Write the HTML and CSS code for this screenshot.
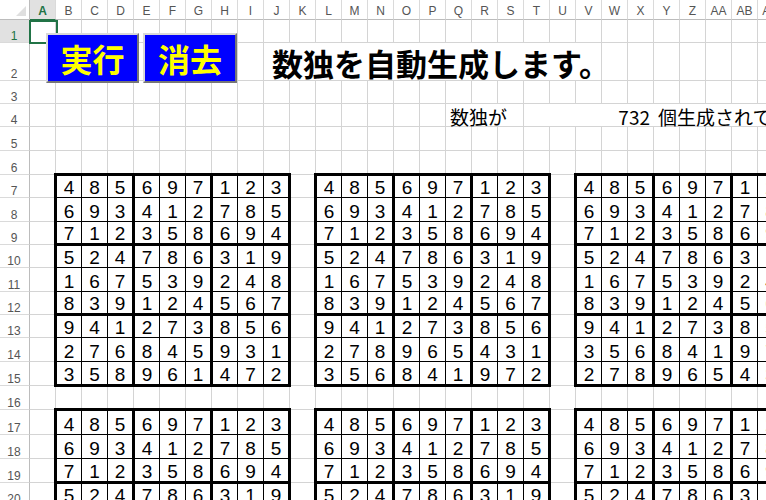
FILE: index.html
```html
<!DOCTYPE html>
<html lang="ja">
<head>
<meta charset="utf-8">
<title>数独自動生成</title>
<link rel="stylesheet" href="styles.css">
</head>
<body>
<div class="sheet">
  <div class="layer grid-bg">
    <div class="corner"><span class="select-all"></span></div>
    <div class="ch on">A</div><div class="ch">B</div><div class="ch">C</div><div class="ch">D</div><div class="ch">E</div><div class="ch">F</div><div class="ch">G</div><div class="ch">H</div><div class="ch">I</div><div class="ch">J</div><div class="ch">K</div><div class="ch">L</div><div class="ch">M</div><div class="ch">N</div><div class="ch">O</div><div class="ch">P</div><div class="ch">Q</div><div class="ch">R</div><div class="ch">S</div><div class="ch">T</div><div class="ch">U</div><div class="ch">V</div><div class="ch">W</div><div class="ch">X</div><div class="ch">Y</div><div class="ch">Z</div><div class="ch">AA</div><div class="ch">AB</div><div class="ch">AC</div><div class="ch">AD</div>
    <div class="rh on">1</div><div class="gl"></div>
    <div class="rh">2</div><div class="gl"></div>
    <div class="rh">3</div><div class="gl"></div>
    <div class="rh">4</div><div class="gl"></div>
    <div class="rh">5</div><div class="gl"></div>
    <div class="rh">6</div><div class="gl"></div>
    <div class="rh">7</div><div class="gl"></div>
    <div class="rh">8</div><div class="gl"></div>
    <div class="rh">9</div><div class="gl"></div>
    <div class="rh">10</div><div class="gl"></div>
    <div class="rh">11</div><div class="gl"></div>
    <div class="rh">12</div><div class="gl"></div>
    <div class="rh">13</div><div class="gl"></div>
    <div class="rh">14</div><div class="gl"></div>
    <div class="rh">15</div><div class="gl"></div>
    <div class="rh">16</div><div class="gl"></div>
    <div class="rh">17</div><div class="gl"></div>
    <div class="rh">18</div><div class="gl"></div>
    <div class="rh">19</div><div class="gl"></div>
    <div class="rh">20</div><div class="gl"></div>
    <div class="rh">21</div><div class="gl"></div>
    <div class="rh">22</div><div class="gl"></div>
    <div class="rh">23</div><div class="gl"></div>
    <div class="rh">24</div><div class="gl"></div>
    <div class="rh">25</div><div class="gl"></div>
  </div>

  <div class="layer grid-fg">
    <div class="active-cell"></div>
    <div class="buttons">
      <button class="btn btn-run">実行</button>
      <button class="btn btn-clear">消去</button>
    </div>
    <div class="title">数独を自動生成します。</div>
    <div class="count-label">数独が</div>
    <div class="count">732</div>
    <div class="count-tail">個生成されています。</div>

    <div class="sudoku upper c1">
      <span>4</span><span>8</span><span>5</span><span>6</span><span>9</span><span>7</span><span>1</span><span>2</span><span>3</span>
      <span>6</span><span>9</span><span>3</span><span>4</span><span>1</span><span>2</span><span>7</span><span>8</span><span>5</span>
      <span>7</span><span>1</span><span>2</span><span>3</span><span>5</span><span>8</span><span>6</span><span>9</span><span>4</span>
      <span>5</span><span>2</span><span>4</span><span>7</span><span>8</span><span>6</span><span>3</span><span>1</span><span>9</span>
      <span>1</span><span>6</span><span>7</span><span>5</span><span>3</span><span>9</span><span>2</span><span>4</span><span>8</span>
      <span>8</span><span>3</span><span>9</span><span>1</span><span>2</span><span>4</span><span>5</span><span>6</span><span>7</span>
      <span>9</span><span>4</span><span>1</span><span>2</span><span>7</span><span>3</span><span>8</span><span>5</span><span>6</span>
      <span>2</span><span>7</span><span>6</span><span>8</span><span>4</span><span>5</span><span>9</span><span>3</span><span>1</span>
      <span>3</span><span>5</span><span>8</span><span>9</span><span>6</span><span>1</span><span>4</span><span>7</span><span>2</span>
    </div>

    <div class="sudoku upper c2">
      <span>4</span><span>8</span><span>5</span><span>6</span><span>9</span><span>7</span><span>1</span><span>2</span><span>3</span>
      <span>6</span><span>9</span><span>3</span><span>4</span><span>1</span><span>2</span><span>7</span><span>8</span><span>5</span>
      <span>7</span><span>1</span><span>2</span><span>3</span><span>5</span><span>8</span><span>6</span><span>9</span><span>4</span>
      <span>5</span><span>2</span><span>4</span><span>7</span><span>8</span><span>6</span><span>3</span><span>1</span><span>9</span>
      <span>1</span><span>6</span><span>7</span><span>5</span><span>3</span><span>9</span><span>2</span><span>4</span><span>8</span>
      <span>8</span><span>3</span><span>9</span><span>1</span><span>2</span><span>4</span><span>5</span><span>6</span><span>7</span>
      <span>9</span><span>4</span><span>1</span><span>2</span><span>7</span><span>3</span><span>8</span><span>5</span><span>6</span>
      <span>2</span><span>7</span><span>8</span><span>9</span><span>6</span><span>5</span><span>4</span><span>3</span><span>1</span>
      <span>3</span><span>5</span><span>6</span><span>8</span><span>4</span><span>1</span><span>9</span><span>7</span><span>2</span>
    </div>

    <div class="sudoku upper c3">
      <span>4</span><span>8</span><span>5</span><span>6</span><span>9</span><span>7</span><span>1</span><span>2</span><span>3</span>
      <span>6</span><span>9</span><span>3</span><span>4</span><span>1</span><span>2</span><span>7</span><span>8</span><span>5</span>
      <span>7</span><span>1</span><span>2</span><span>3</span><span>5</span><span>8</span><span>6</span><span>9</span><span>4</span>
      <span>5</span><span>2</span><span>4</span><span>7</span><span>8</span><span>6</span><span>3</span><span>1</span><span>9</span>
      <span>1</span><span>6</span><span>7</span><span>5</span><span>3</span><span>9</span><span>2</span><span>4</span><span>8</span>
      <span>8</span><span>3</span><span>9</span><span>1</span><span>2</span><span>4</span><span>5</span><span>6</span><span>7</span>
      <span>9</span><span>4</span><span>1</span><span>2</span><span>7</span><span>3</span><span>8</span><span>5</span><span>6</span>
      <span>3</span><span>5</span><span>6</span><span>8</span><span>4</span><span>1</span><span>9</span><span>7</span><span>2</span>
      <span>2</span><span>7</span><span>8</span><span>9</span><span>6</span><span>5</span><span>4</span><span>3</span><span>1</span>
    </div>

    <div class="sudoku lower c1">
      <span>4</span><span>8</span><span>5</span><span>6</span><span>9</span><span>7</span><span>1</span><span>2</span><span>3</span>
      <span>6</span><span>9</span><span>3</span><span>4</span><span>1</span><span>2</span><span>7</span><span>8</span><span>5</span>
      <span>7</span><span>1</span><span>2</span><span>3</span><span>5</span><span>8</span><span>6</span><span>9</span><span>4</span>
      <span>5</span><span>2</span><span>4</span><span>7</span><span>8</span><span>6</span><span>3</span><span>1</span><span>9</span>
      <span>1</span><span>6</span><span>7</span><span>5</span><span>3</span><span>9</span><span>2</span><span>4</span><span>8</span>
      <span>8</span><span>3</span><span>9</span><span>1</span><span>2</span><span>4</span><span>5</span><span>6</span><span>7</span>
      <span>9</span><span>4</span><span>1</span><span>2</span><span>7</span><span>3</span><span>8</span><span>5</span><span>6</span>
      <span>3</span><span>5</span><span>8</span><span>9</span><span>6</span><span>1</span><span>4</span><span>7</span><span>2</span>
      <span>2</span><span>7</span><span>6</span><span>8</span><span>4</span><span>5</span><span>9</span><span>3</span><span>1</span>
    </div>

    <div class="sudoku lower c2">
      <span>4</span><span>8</span><span>5</span><span>6</span><span>9</span><span>7</span><span>1</span><span>2</span><span>3</span>
      <span>6</span><span>9</span><span>3</span><span>4</span><span>1</span><span>2</span><span>7</span><span>8</span><span>5</span>
      <span>7</span><span>1</span><span>2</span><span>3</span><span>5</span><span>8</span><span>6</span><span>9</span><span>4</span>
      <span>5</span><span>2</span><span>4</span><span>7</span><span>8</span><span>6</span><span>3</span><span>1</span><span>9</span>
      <span>1</span><span>6</span><span>7</span><span>5</span><span>3</span><span>9</span><span>2</span><span>4</span><span>8</span>
      <span>8</span><span>3</span><span>9</span><span>1</span><span>2</span><span>4</span><span>5</span><span>6</span><span>7</span>
      <span>9</span><span>4</span><span>1</span><span>2</span><span>7</span><span>3</span><span>8</span><span>5</span><span>6</span>
      <span>3</span><span>5</span><span>8</span><span>9</span><span>6</span><span>1</span><span>4</span><span>7</span><span>2</span>
      <span>2</span><span>7</span><span>6</span><span>8</span><span>4</span><span>5</span><span>9</span><span>3</span><span>1</span>
    </div>

    <div class="sudoku lower c3">
      <span>4</span><span>8</span><span>5</span><span>6</span><span>9</span><span>7</span><span>1</span><span>2</span><span>3</span>
      <span>6</span><span>9</span><span>3</span><span>4</span><span>1</span><span>2</span><span>7</span><span>8</span><span>5</span>
      <span>7</span><span>1</span><span>2</span><span>3</span><span>5</span><span>8</span><span>6</span><span>9</span><span>4</span>
      <span>5</span><span>2</span><span>4</span><span>7</span><span>8</span><span>6</span><span>3</span><span>1</span><span>9</span>
      <span>1</span><span>6</span><span>7</span><span>5</span><span>3</span><span>9</span><span>2</span><span>4</span><span>8</span>
      <span>8</span><span>3</span><span>9</span><span>1</span><span>2</span><span>4</span><span>5</span><span>6</span><span>7</span>
      <span>9</span><span>4</span><span>1</span><span>2</span><span>7</span><span>3</span><span>8</span><span>5</span><span>6</span>
      <span>2</span><span>7</span><span>6</span><span>8</span><span>4</span><span>5</span><span>9</span><span>3</span><span>1</span>
      <span>3</span><span>5</span><span>8</span><span>9</span><span>6</span><span>1</span><span>4</span><span>7</span><span>2</span>
    </div>
  </div>
</div>
</body>
</html>
```

FILE: styles.css
```css
:root {
  --cols: 30px repeat(30, 26px);
  --rows: 20px
          23px 38px 23px 23px 24px 24px
          23px 24px 23px 23px 24px 23px 23px 24px 24px
          24px
          25px 24px 24px 23px 24px 24px 23px 24px 24px;
  --grid: #d4d4d4;
  --head-line: #bcbcbc;
  --excel-green: #217346;
}

html, body {
  margin: 0;
  overflow: hidden;
  background: #fff;
}

.sheet {
  display: grid;
  width: 810px;
  height: 625px;
  font-family: "Liberation Sans", Arial, sans-serif;
  color: #000;
}

.layer {
  grid-area: 1 / 1;
  display: grid;
  grid-template-columns: var(--cols);
  grid-template-rows: var(--rows);
}

/* ---------- background: headers + gridlines ---------- */
.corner {
  box-sizing: border-box;
  border-right: 1px solid var(--head-line);
  border-bottom: 1px solid var(--head-line);
  display: flex;
  justify-content: flex-end;
  align-items: flex-end;
  padding: 0 3px 3px 0;
}

.select-all {
  width: 0;
  height: 0;
  border-left: 10px solid transparent;
  border-bottom: 10px solid #dfdfdf;
}

.ch {
  box-sizing: border-box;
  border-right: 1px solid #dadada;
  border-bottom: 1px solid var(--head-line);
  display: flex;
  justify-content: center;
  align-items: center;
  padding-top: 2px;
  font-size: 12px;
  line-height: 12px;
  color: #555;
}

.ch.on {
  background: #e1e1e1;
  color: var(--excel-green);
  font-weight: bold;
  border-bottom-color: var(--excel-green);
}

.rh {
  box-sizing: border-box;
  border-right: 1px solid var(--head-line);
  border-bottom: 1px solid #dadada;
  display: flex;
  justify-content: center;
  align-items: flex-end;
  padding-right: 1px;
  font-size: 12px;
  line-height: 12px;
  color: #555;
}

.rh.on {
  background: #e1e1e1;
  color: var(--excel-green);
  border-right-color: var(--excel-green);
}

.gl {
  grid-column: span 30;
  box-sizing: border-box;
  border-bottom: 1px solid var(--grid);
  background: repeating-linear-gradient(90deg, transparent 0 25px, var(--grid) 25px 26px);
}

/* ---------- foreground content ---------- */
.active-cell {
  grid-area: 2 / 2 / 3 / 3;
  margin: 0 -2px -1px -1px;
  border: 2px solid var(--excel-green);
}

.buttons {
  grid-area: 2 / 2 / 5 / 12;
  display: flex;
  align-items: flex-start;
  gap: 4px;
  padding: 13px 0 0 16px;
}

.btn {
  box-sizing: border-box;
  width: 93px;
  height: 50px;
  padding: 0;
  margin: 0;
  display: flex;
  align-items: center;
  justify-content: center;
  background: #0000ff;
  color: #ffff00;
  font: bold 32px/1 "Noto Sans CJK JP", sans-serif;
  border: 2px solid;
  border-color: #d8d8d8 #767676 #767676 #d8d8d8;
}

.btn-clear {
  width: 94px;
}

.title {
  grid-area: 3 / 11 / 4 / 24;
  margin: 0 1px 1px 0;
  background: #fff;
  display: flex;
  align-items: flex-end;
  padding: 0 0 2px 8px;
  font: bold 31px/31px "Noto Sans CJK JP", sans-serif;
  white-space: nowrap;
}

.count-label,
.count,
.count-tail {
  background: #fff;
  display: flex;
  align-items: flex-end;
  margin-bottom: 1px;
  font: 19px/19px "Noto Sans CJK JP", sans-serif;
  white-space: nowrap;
}

.count-label {
  grid-area: 5 / 18 / 6 / 21;
  margin-right: 1px;
  padding-left: 4px;
}

.count {
  grid-area: 5 / 21 / 6 / 26;
  justify-content: flex-end;
  padding-right: 4px;
}

.count-tail {
  grid-area: 5 / 26 / 6 / 32;
  padding-left: 4px;
}

/* ---------- sudoku boards ---------- */
.sudoku {
  display: grid;
  grid-template-columns: 25px 26px 27px 25px 26px 27px 25px 26px 27px;
  margin: -2px -1px -1px -2px;
  border-left: 3px solid #000;
  border-top: 3px solid #000;
  background: #fff;
  font: 19px/19px "Liberation Sans", Arial, sans-serif;
  color: #000;
}

.sudoku.upper {
  grid-row: 8 / 17;
  grid-template-rows: 22px 24px 24px 22px 24px 24px 22px 24px 25px;
}

.sudoku.lower {
  grid-row: 18 / 27;
  grid-template-rows: 24px 24px 25px 22px 24px 25px 22px 24px 25px;
}

.sudoku.c1 { grid-column: 3 / 12; }
.sudoku.c2 { grid-column: 13 / 22; }
.sudoku.c3 { grid-column: 23 / 32; }

.sudoku span {
  box-sizing: border-box;
  border-right: 1px solid #000;
  border-bottom: 1px solid #000;
  display: flex;
  align-items: flex-end;
  justify-content: center;
}

.sudoku span:nth-child(3n) {
  border-right-width: 3px;
}

.sudoku span:nth-child(n+19):nth-child(-n+27),
.sudoku span:nth-child(n+46):nth-child(-n+54),
.sudoku span:nth-child(n+73):nth-child(-n+81) {
  border-bottom-width: 3px;
}
```
